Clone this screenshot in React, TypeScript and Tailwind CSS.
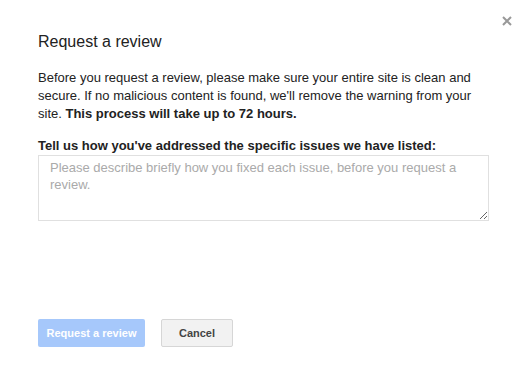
const App = () => {
  return (
    <div className="relative w-[526px] h-[376px] bg-white font-['Liberation_Sans',Arial,sans-serif] text-[#222]">
      <button className="absolute right-[13px] top-[15px] w-[12px] h-[12px] flex items-center justify-center">
        <svg width="10" height="10" viewBox="0 0 10 10">
          <path d="M1 1L9 9M9 1L1 9" stroke="#999" strokeWidth="2" />
        </svg>
      </button>

      <div className="pl-[38px] pr-[37px] pt-[32px] flex flex-col">
        <h2 className="text-[16px] leading-[20px] text-[#222]">Request a review</h2>

        <p className="mt-[17px] text-[13px] leading-[18px] text-[#222]">
          Before you request a review, please make sure your entire site is clean and
          secure. If no malicious content is found, we'll remove the warning from your
          site. <b>This process will take up to 72 hours.</b>
        </p>

        <label
          htmlFor="review"
          className="mt-[15px] text-[13px] leading-[16px] font-bold text-[#222]"
        >
          Tell us how you've addressed the specific issues we have listed:
        </label>
        <textarea
          id="review"
          placeholder="Please describe briefly how you fixed each issue, before you request a review."
          className="mt-[1px] w-[451px] h-[66px] border border-[#e0e0e0] px-[11px] pt-[3px] text-[13px] leading-[17px] placeholder:text-[#aaa] outline-none"
        />

        <div className="mt-[98px] flex gap-[16px]">
          <button
            disabled
            className="h-[28px] w-[107px] rounded-[2px] bg-[#a6c8fb] text-white text-[11px] font-bold"
          >
            Request a review
          </button>
          <button className="h-[28px] w-[72px] rounded-[2px] border border-[#d6d6d6] bg-[#f2f2f2] text-[#444] text-[11px] font-bold">
            Cancel
          </button>
        </div>
      </div>
    </div>
  );
};

export default App;
